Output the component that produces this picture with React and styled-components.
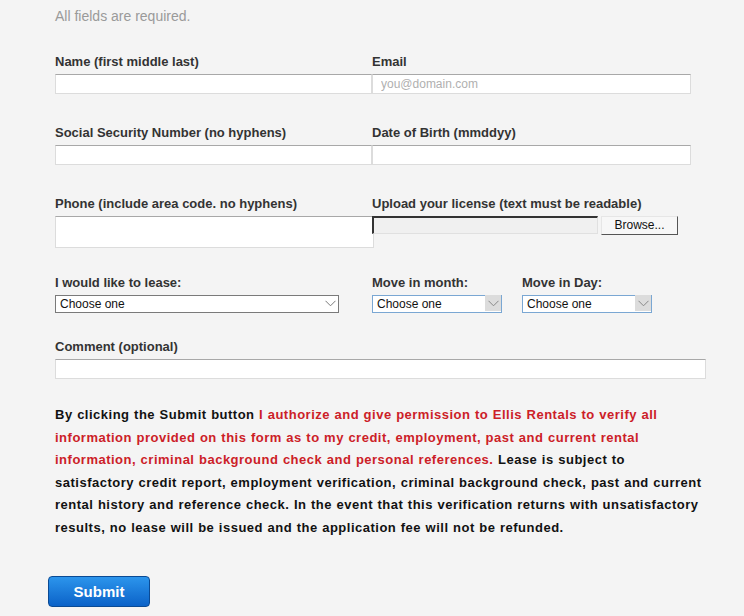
import React from "react";
import styled, { createGlobalStyle } from "styled-components";

const Global = createGlobalStyle`
  html, body { margin: 0; padding: 0; background: #f4f4f4; }
  body { font-family: "Liberation Sans", Arial, sans-serif; color: #333; }
`;

const Page = styled.form`
  padding: 7px 0 10px 55px;
  width: 689px;
  box-sizing: border-box;
  min-height: 616px;
`;

const Note = styled.div`
  font-size: 14px;
  line-height: 18px;
  color: #9a9a9a;
  margin-bottom: 29px;
`;

const Row = styled.div`
  display: grid;
  grid-template-columns: ${(p) => p.$cols || "317px 319px"};
  margin-bottom: ${(p) => p.$gap ?? 31}px;
`;

const Field = styled.div`
  display: flex;
  flex-direction: column;
  align-items: flex-start;
`;

const Label = styled.label`
  font-size: 13px;
  font-weight: bold;
  line-height: 15px;
  color: #333;
  margin-bottom: 5px;
`;

const TextInput = styled.input`
  box-sizing: border-box;
  width: ${(p) => p.$w || 317}px;
  height: ${(p) => p.$h || 20}px;
  margin: 0;
  padding: 0 8px;
  background: #fff;
  border: 1px solid #dcdcdc;
  border-top-color: #a8a8a8;
  font-family: "Liberation Sans", Arial, sans-serif;
  font-size: 12px;
  color: #333;
  outline: none;
  &::placeholder { color: #b0b0b0; }
`;

const FileRow = styled.div`
  display: flex;
  align-items: flex-start;
  gap: 3px;
`;

const FileBox = styled.div`
  box-sizing: border-box;
  width: 226px;
  height: 18px;
  background: #f0f0f0;
  border: 1px solid #e0e0e0;
  border-top: 2px solid #333;
  border-left: 2px solid #333;
`;

const BrowseButton = styled.button`
  box-sizing: border-box;
  width: 77px;
  height: 19px;
  padding: 0;
  background: #f7f7f7;
  border: 1px solid #e6e6e6;
  border-right-color: #555;
  border-bottom-color: #555;
  font-family: "Liberation Sans", Arial, sans-serif;
  font-size: 12px;
  color: #111;
  line-height: 17px;
`;

const SelectWrap = styled.div`
  position: relative;
  width: ${(p) => p.$w}px;
  height: 18px;
  margin-top: -1px;
`;

const Select = styled.select`
  appearance: none;
  box-sizing: border-box;
  width: 100%;
  height: 18px;
  margin: 0;
  padding: 0 0 0 4px;
  background: #fff;
  border: 1px solid ${(p) => (p.$blue ? "#7aa7d3" : "#7a7a7a")};
  border-radius: 0;
  font-family: "Liberation Sans", Arial, sans-serif;
  font-size: 12px;
  color: #111;
  line-height: 16px;
  outline: none;
`;

const Arrow = styled.span`
  position: absolute;
  top: 1px;
  right: 1px;
  width: 16px;
  height: 16px;
  display: flex;
  align-items: center;
  justify-content: center;
  background: ${(p) => (p.$boxed ? "#dcdcdc" : "transparent")};
  pointer-events: none;
`;

const Chevron = ({ color = "#7a7a7a" }) => (
  <svg width="11" height="7" viewBox="0 0 11 7">
    <path d="M0.5 0.8 L5.5 5.8 L10.5 0.8" fill="none" stroke={color} strokeWidth="1" />
  </svg>
);

const Legal = styled.p`
  margin: 0 0 36px;
  width: 651px;
  font-size: 13px;
  font-weight: bold;
  line-height: 22.6px;
  color: #111;
  letter-spacing: 0.5px;
  word-spacing: 0.4px;
`;

const Red = styled.span`
  color: #cc2027;
`;

const SubmitButton = styled.button`
  margin-left: -7px;
  box-sizing: border-box;
  width: 102px;
  height: 31px;
  border: 1px solid #0a4a94;
  border-radius: 4px;
  background: linear-gradient(#2c95ec, #0b62c8);
  color: #fff;
  font-family: "Liberation Sans", Arial, sans-serif;
  font-size: 15px;
  font-weight: bold;
  cursor: pointer;
`;

export default function App() {
  return (
    <>
      <Global />
      <Page onSubmit={(e) => e.preventDefault()}>
        <Note>All fields are required.</Note>

        <Row>
          <Field>
            <Label>Name (first middle last)</Label>
            <TextInput />
          </Field>
          <Field>
            <Label>Email</Label>
            <TextInput $w={319} placeholder="you@domain.com" />
          </Field>
        </Row>

        <Row>
          <Field>
            <Label>Social Security Number (no hyphens)</Label>
            <TextInput />
          </Field>
          <Field>
            <Label>Date of Birth (mmddyy)</Label>
            <TextInput $w={319} />
          </Field>
        </Row>

        <Row $gap={27}>
          <Field>
            <Label>Phone (include area code. no hyphens)</Label>
            <TextInput $w={319} $h={32} />
          </Field>
          <Field>
            <Label>Upload your license (text must be readable)</Label>
            <FileRow>
              <FileBox />
              <BrowseButton type="button">Browse...</BrowseButton>
            </FileRow>
          </Field>
        </Row>

        <Row $cols="317px 150px 180px" $gap={27}>
          <Field>
            <Label>I would like to lease:</Label>
            <SelectWrap $w={284}>
              <Select defaultValue="">
                <option value="">Choose one</option>
              </Select>
              <Arrow>
                <Chevron />
              </Arrow>
            </SelectWrap>
          </Field>
          <Field>
            <Label>Move in month:</Label>
            <SelectWrap $w={130}>
              <Select $blue defaultValue="">
                <option value="">Choose one</option>
              </Select>
              <Arrow $boxed>
                <Chevron color="#888" />
              </Arrow>
            </SelectWrap>
          </Field>
          <Field>
            <Label>Move in Day:</Label>
            <SelectWrap $w={130}>
              <Select $blue defaultValue="">
                <option value="">Choose one</option>
              </Select>
              <Arrow $boxed>
                <Chevron color="#888" />
              </Arrow>
            </SelectWrap>
          </Field>
        </Row>

        <Row $cols="651px" $gap={25}>
          <Field>
            <Label>Comment (optional)</Label>
            <TextInput $w={651} />
          </Field>
        </Row>

        <Legal>
          By clicking the Submit button{" "}
          <Red>
            I authorize and give permission to Ellis Rentals to verify all information provided on
            this form as to my credit, employment, past and current rental information, criminal
            background check and personal references.
          </Red>{" "}
          Lease is subject to satisfactory credit report, employment verification, criminal
          background check, past and current rental history and reference check. In the event that
          this verification returns with unsatisfactory results, no lease will be issued and the
          application fee will not be refunded.
        </Legal>

        <SubmitButton type="submit">Submit</SubmitButton>
      </Page>
    </>
  );
}
